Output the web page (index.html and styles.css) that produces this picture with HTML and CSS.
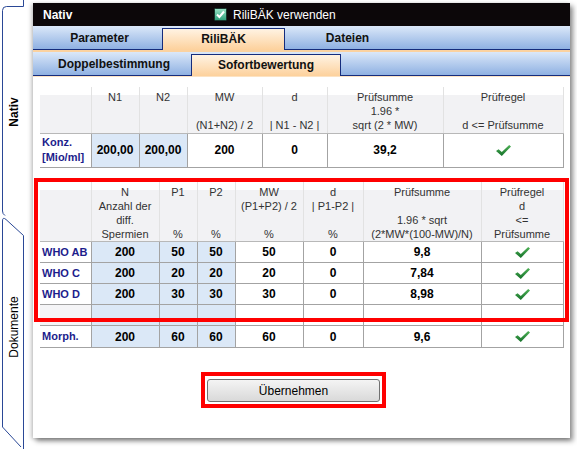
FILE: index.html
```html
<!DOCTYPE html>
<html lang="de">
<head>
  <meta charset="UTF-8" />
  <title>Nativ - RiliBÄK</title>
  <link rel="stylesheet" href="styles.css">
</head>
<body>
  <svg width="0" height="0" class="defs">
    <defs>
      <linearGradient id="okGrad" x1="0" y1="0" x2="0" y2="1">
        <stop offset="0" stop-color="#4fb257"/>
        <stop offset="1" stop-color="#147029"/>
      </linearGradient>
      <linearGradient id="boxGrad" x1="0" y1="0" x2="0" y2="1">
        <stop offset="0" stop-color="#9be3c7"/>
        <stop offset="1" stop-color="#2b9e78"/>
      </linearGradient>
      <symbol id="ok" viewBox="0 0 15 11">
        <polygon points="0,6 2.6,4.2 5.8,7 13.2,0 15,1.6 5.8,11" fill="url(#okGrad)"/>
      </symbol>
    </defs>
  </svg>

  <div class="app">
    <svg class="side" width="33" height="449" viewBox="0 0 33 449">
      <path d="M23.5 0 V6.5 H6.5 Q2.5 6.5 2.5 10.5 V211 Q2.5 214 5 215.5" fill="none" stroke="#2a4896"/>
      <path d="M23.5 449 V235.5 L6 219.5 Q2.5 216.5 2.5 221 V427 L21 447" fill="none" stroke="#2a4896"/>
      <text x="14" y="112" transform="rotate(-90 14 112)" class="side-label strong">Nativ</text>
      <text x="14" y="327" transform="rotate(-90 14 327)" class="side-label">Dokumente</text>
    </svg>

    <div class="window">
      <div class="titlebar">
        <span class="title">Nativ</span>
        <span class="rili">
          <svg class="checkbox" width="13" height="13" viewBox="0 0 13 13">
            <rect x="0.5" y="0.5" width="12" height="12" rx="1" fill="url(#boxGrad)" stroke="#17362c"/>
            <path d="M3 6.5 L5.4 9 L10 3.5" fill="none" stroke="#fff" stroke-width="2"/>
          </svg>
          RiliBÄK verwenden
        </span>
      </div>

      <div class="tabs tabs-main">
        <div class="tab tab-param">Parameter</div>
        <div class="tab tab-rili active">RiliBÄK</div>
        <div class="tab tab-files">Dateien</div>
      </div>

      <div class="page">
        <div class="tabs tabs-sub">
          <div class="tab tab-double">Doppelbestimmung</div>
          <div class="tab tab-instant active">Sofortbewertung</div>
        </div>

        <div class="content">
          <table class="grid">
            <colgroup>
              <col class="k-lbl"><col class="k-n"><col class="k-n"><col class="k-mw"><col class="k-d"><col class="k-sum"><col class="k-rule">
            </colgroup>
            <tr class="head-3">
              <th></th>
              <th>N1</th>
              <th>N2</th>
              <th>MW<br><br>(N1+N2) / 2</th>
              <th>d<br><br>| N1 - N2 |</th>
              <th>Prüfsumme<br>1.96 *<br>sqrt (2 * MW)</th>
              <th>Prüfregel<br><br>d &lt;= Prüfsumme</th>
            </tr>
            <tr class="row-konz">
              <td class="lbl">Konz.<br>[Mio/ml]</td>
              <td class="in">200,00</td>
              <td class="in">200,00</td>
              <td>200</td>
              <td>0</td>
              <td>39,2</td>
              <td><svg class="ok"><use href="#ok"/></svg></td>
            </tr>
          </table>

          <table class="grid grid-sperm">
            <colgroup>
              <col class="s-lbl"><col class="s-n"><col class="s-p"><col class="s-p"><col class="s-mw"><col class="s-d"><col class="s-sum"><col class="s-rule">
            </colgroup>
            <tr class="head-4">
              <th></th>
              <th>N<br>Anzahl der<br>diff.<br>Spermien</th>
              <th>P1<br><br><br>%</th>
              <th>P2<br><br><br>%</th>
              <th>MW<br>(P1+P2) / 2<br><br>%</th>
              <th>d<br>| P1-P2 |<br><br>%</th>
              <th>Prüfsumme<br><br>1.96 * sqrt<br>(2*MW*(100-MW)/N)</th>
              <th>Prüfregel<br>d<br>&lt;=<br>Prüfsumme</th>
            </tr>
            <tr class="row">
              <td class="lbl">WHO AB</td>
              <td class="in">200</td><td class="in">50</td><td class="in">50</td>
              <td>50</td><td>0</td><td>9,8</td>
              <td><svg class="ok"><use href="#ok"/></svg></td>
            </tr>
            <tr class="row">
              <td class="lbl">WHO C</td>
              <td class="in">200</td><td class="in">20</td><td class="in">20</td>
              <td>20</td><td>0</td><td>7,84</td>
              <td><svg class="ok"><use href="#ok"/></svg></td>
            </tr>
            <tr class="row">
              <td class="lbl">WHO D</td>
              <td class="in">200</td><td class="in">30</td><td class="in">30</td>
              <td>30</td><td>0</td><td>8,98</td>
              <td><svg class="ok"><use href="#ok"/></svg></td>
            </tr>
            <tr class="row">
              <td class="lbl empty"></td>
              <td class="in"></td><td class="in"></td><td class="in"></td>
              <td></td><td></td><td></td><td></td>
            </tr>
            <tr class="row row-last">
              <td class="lbl">Morph.</td>
              <td class="in">200</td><td class="in">60</td><td class="in">60</td>
              <td>60</td><td>0</td><td>9,6</td>
              <td><svg class="ok"><use href="#ok"/></svg></td>
            </tr>
          </table>

          <div class="actions">
            <div class="mark-btn">
              <button class="btn">Übernehmen</button>
            </div>
          </div>

          <div class="mark-table"></div>
        </div>
      </div>
    </div>
  </div>
</body>
</html>
```

FILE: styles.css
```css
* {
  box-sizing: border-box;
  margin: 0;
  padding: 0;
}
body {
  font-family: "Liberation Sans", Arial, sans-serif;
  background: #fff;
  color: #000;
  width: 577px;
  height: 449px;
  overflow: hidden;
}
.defs {
  position: absolute;
}
.app {
  display: flex;
  height: 449px;
}
.side {
  flex-shrink: 0;
  display: block;
}
.side-label {
  font-family: "Liberation Sans", Arial, sans-serif;
  font-size: 12px;
  fill: #000;
  text-anchor: middle;
  dominant-baseline: central;
}
.side-label.strong {
  font-weight: bold;
}
.window {
  width: 537px;
  height: 435px;
  margin-top: 3px;
  background: #fff;
  display: flex;
  flex-direction: column;
  box-shadow: 3px 3px 5px rgba(0, 0, 0, 0.45), -2px 1px 4px rgba(0, 0, 0, 0.2);
}
.titlebar {
  height: 23px;
  background: #0c0709;
  color: #fff;
  display: flex;
  align-items: center;
  font-size: 12px;
}
.title {
  width: 181px;
  padding-left: 10px;
  font-weight: bold;
}
.rili {
  display: flex;
  align-items: center;
  gap: 6px;
}
.checkbox {
  display: block;
}

/* tab strips */
.tabs {
  height: 24px;
  display: flex;
  align-items: flex-end;
  padding-left: 4px;
  background: linear-gradient(#dbe8f9, #8fb1e2);
  border-bottom: 1px solid #152c7c;
  font-size: 12px;
  font-weight: bold;
  color: #111;
}
.tab {
  height: 21px;
  line-height: 21px;
  text-align: center;
  flex-shrink: 0;
}
.tab.active {
  height: 22px;
  line-height: 20px;
  margin-bottom: -1px;
  border: 1px solid #152c7c;
  border-bottom: none;
  background: linear-gradient(#fff3e3, #fdd19c);
}
.tab-param { width: 125px; }
.tab-rili { width: 123px; }
.tab-files { width: 125px; }
.tab-double { width: 154px; }
.tab-instant { width: 150px; }
.page {
  flex: 1;
  display: flex;
  flex-direction: column;
  border-top: 2px solid #fbd2a0;
}
.content {
  flex: 1;
  position: relative;
  padding: 10px 7px 0;
  border-top: 1px solid #fde3c3;
}

/* tables */
.grid {
  width: 523px;
  border-collapse: collapse;
  table-layout: fixed;
}
.grid th {
  font-size: 11px;
  font-weight: normal;
  color: #333;
  line-height: 14px;
  vertical-align: top;
  padding-top: 3px;
  background: linear-gradient(#fff 0 8px, #f2f2f4 8px);
  border-right: 1px solid #e2e2e2;
  border-bottom: 1px solid #b8b8b8;
  white-space: nowrap;
}
.grid td {
  font-size: 12px;
  font-weight: bold;
  text-align: center;
  border-right: 1px solid #a3a3a3;
  border-bottom: 1px solid #a3a3a3;
}
.grid td.lbl {
  font-size: 11px;
  text-align: left;
  color: #1d1d8c;
  line-height: 15px;
  padding-left: 2px;
}
.grid td.empty {
  background: #f5f5f7;
}
.grid td.in {
  background: #dbe8f7;
}
.ok {
  display: block;
  width: 15px;
  height: 11px;
  margin: 0 auto;
}
.head-3 { height: 46px; }
.row-konz { height: 34px; }
.head-4 { height: 60px; }
.row { height: 21px; }
.row-last { height: 22px; }
.grid-sperm {
  margin-top: 14px;
}
.k-lbl { width: 51px; }
.k-n { width: 48px; }
.k-mw { width: 75px; }
.k-d { width: 65px; }
.k-sum { width: 116px; }
.k-rule { width: 120px; }
.s-lbl { width: 51px; }
.s-n { width: 68px; }
.s-p { width: 38px; }
.s-mw { width: 68px; }
.s-d { width: 60px; }
.s-sum { width: 118px; }
.s-rule { width: 82px; }

/* button + annotations */
.actions {
  display: flex;
  padding-left: 161px;
  margin-top: 24px;
}
.mark-btn {
  border: 4px solid #f00;
  padding: 3px 2px 2px;
}
.btn {
  display: block;
  width: 173px;
  height: 23px;
  border: 1px solid #707070;
  border-radius: 3px;
  background: linear-gradient(#f4f4f4, #d9d9d9);
  font-family: "Liberation Sans", Arial, sans-serif;
  font-size: 12px;
  color: #000;
}
.mark-table {
  position: absolute;
  left: 1px;
  top: 101px;
  width: 535px;
  height: 144px;
  border: 4px solid #f00;
}
```
